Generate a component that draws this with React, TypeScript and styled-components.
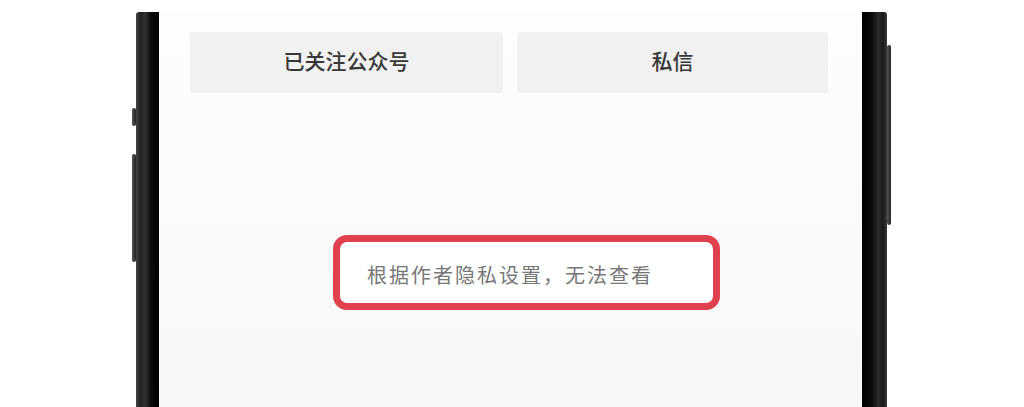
import React from 'react';
import styled, { createGlobalStyle } from 'styled-components';

const GlobalStyle = createGlobalStyle`
  html, body {
    margin: 0;
    padding: 0;
    background: #ffffff;
    font-family: "Noto Sans CJK SC", "Noto Sans", sans-serif;
  }
`;

const App: React.FC = () => (
  <>
    <GlobalStyle />
    <Page>
      <Phone>
        <Bezel side="left">
          <SideKey side="left" top={96} height={18} />
          <SideKey side="left" top={142} height={108} />
        </Bezel>
        <Screen>
          <ActionRow>
            <ActionButton>已关注公众号</ActionButton>
            <ActionButton>私信</ActionButton>
          </ActionRow>
          <NoticeBox>根据作者隐私设置，无法查看</NoticeBox>
        </Screen>
        <Bezel side="right">
          <SideKey side="right" top={33} height={180} />
        </Bezel>
      </Phone>
    </Page>
  </>
);

export default App;

const Page = styled.div`
  width: 1024px;
  height: 407px;
  overflow: hidden;
  display: flex;
  padding-top: 12px;
  padding-left: 136px;
  box-sizing: border-box;
`;

const Phone = styled.div`
  display: flex;
  height: 420px;
`;

const Bezel = styled.div<{ side: 'left' | 'right' }>`
  position: relative;
  width: ${({ side }) => (side === 'left' ? 23 : 25)}px;
  background: ${({ side }) =>
    side === 'left'
      ? 'linear-gradient(90deg, #444 0%, #222 20%, #333 40%, #0a0a0a 65%, #000 100%)'
      : 'linear-gradient(90deg, #000 0%, #0c0c0c 40%, #2a2a2a 65%, #1a1a1a 85%, #3a3a3a 100%)'};
  border-radius: ${({ side }) => (side === 'left' ? '3px 0 0 0' : '0 3px 0 0')};
`;

const SideKey = styled.div<{ side: 'left' | 'right'; top: number; height: number }>`
  position: absolute;
  top: ${({ top }) => top}px;
  height: ${({ height }) => height}px;
  width: 4px;
  ${({ side }) => (side === 'left' ? 'left: -4px;' : 'right: -4px;')}
  background: linear-gradient(90deg, #555, #222);
  border-radius: 2px;
`;

const Screen = styled.div`
  width: 703px;
  background: linear-gradient(180deg, #fdfdfd 0%, #fafafa 60%, #f6f6f6 100%);
  padding: 20px 34px 0 31px;
  box-sizing: border-box;
  display: flex;
  flex-direction: column;
`;

const ActionRow = styled.div`
  display: grid;
  grid-template-columns: 313px 311px;
  gap: 14px;
`;

const ActionButton = styled.div`
  height: 61px;
  padding-bottom: 5px;
  box-sizing: border-box;
  background: #f1f1f1;
  border-radius: 3px;
  display: flex;
  align-items: center;
  justify-content: center;
  font-size: 21px;
  font-weight: 500;
  color: #383838;
`;

const NoticeBox = styled.div`
  margin: 142px 0 0 143px;
  width: 387px;
  height: 75px;
  box-sizing: border-box;
  border: 7px solid #e0414f;
  border-radius: 14px;
  background: #ffffff;
  display: flex;
  align-items: center;
  padding-left: 27px;
  padding-top: 4px;
  font-size: 20px;
  letter-spacing: 2px;
  color: #777777;
`;
